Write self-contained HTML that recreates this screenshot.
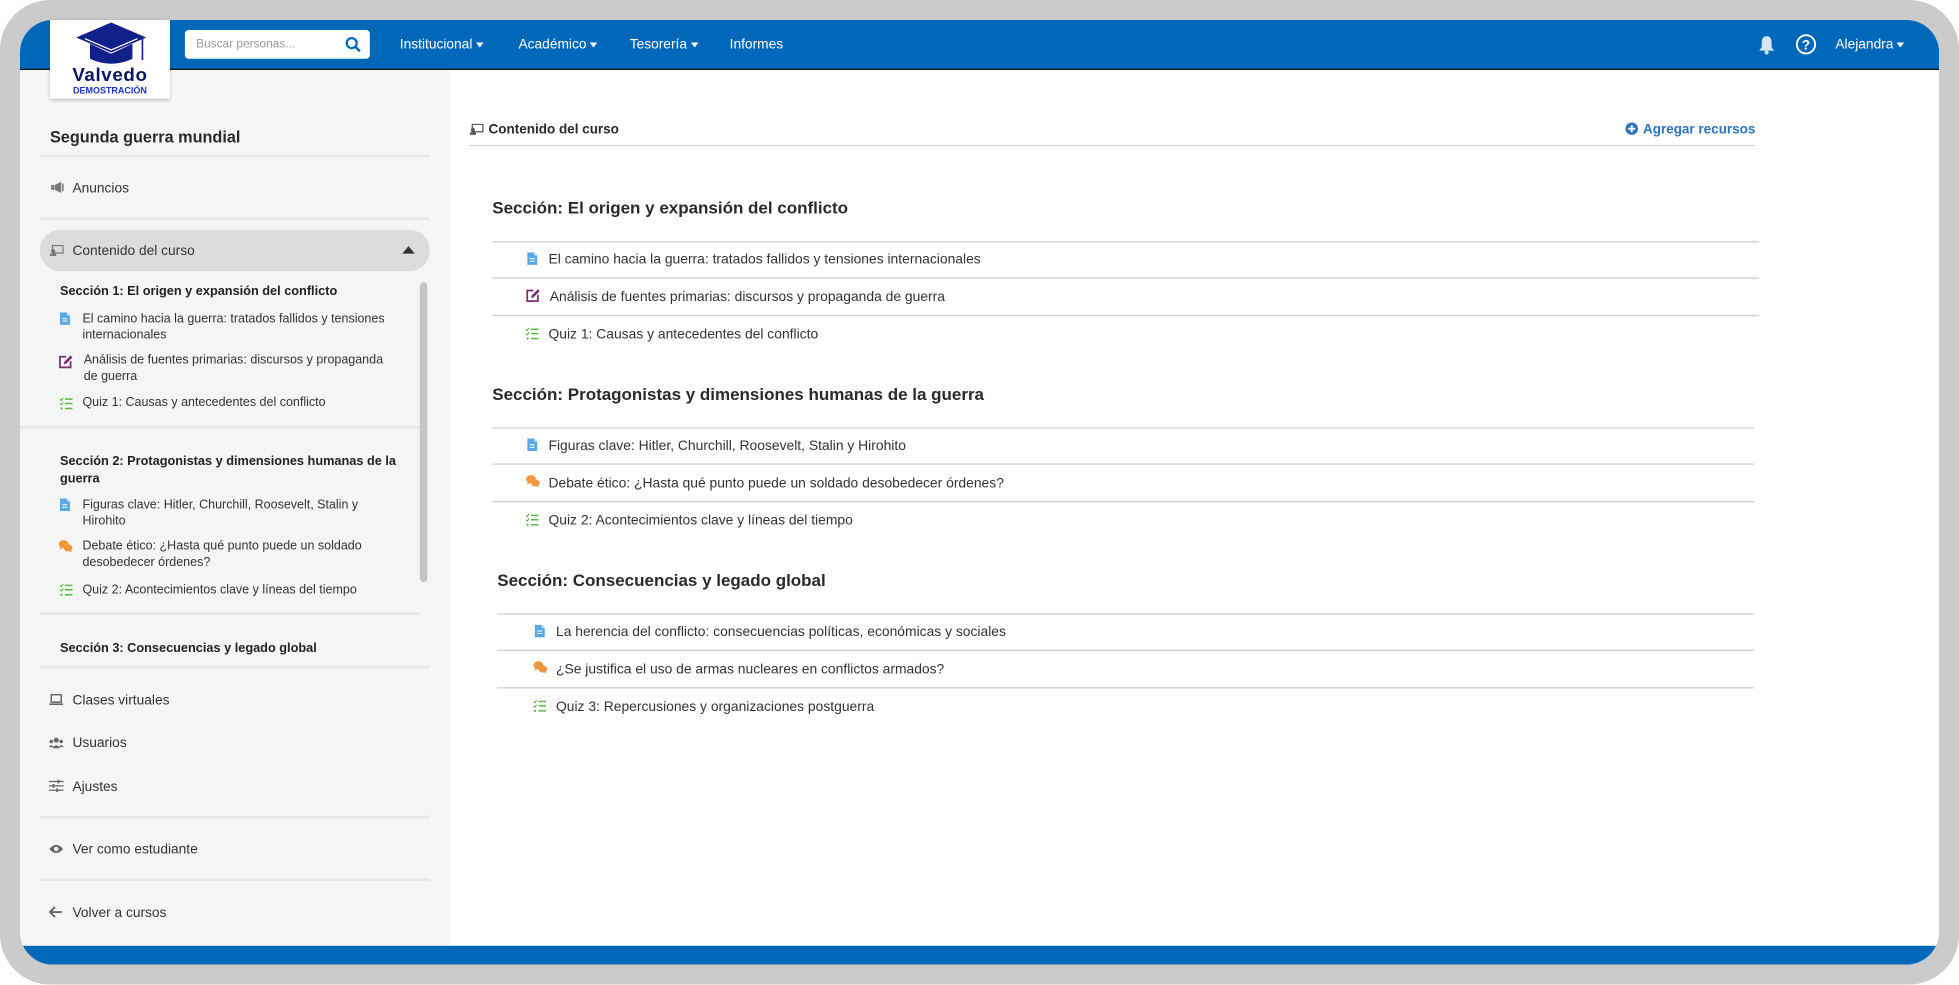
<!DOCTYPE html>
<html><head><meta charset="utf-8">
<style>
*{margin:0;padding:0;box-sizing:border-box}
html,body{width:1959px;height:984px;overflow:hidden;background:#fff}
#w{position:absolute;left:0;top:0;width:1568px;height:788px;transform:scale(1.2494);transform-origin:0 0;font-family:"Liberation Sans",sans-serif;color:#333}
.a{position:absolute;white-space:nowrap}
.frame{position:absolute;left:0;top:0;width:1568px;height:788px;border-radius:40px;background:#cbcbcb}
.inner{position:absolute;left:16px;top:16px;width:1536px;height:756px;border-radius:26px;overflow:hidden;background:#fff}
.nav{position:absolute;left:0;top:0;width:1536px;height:40px;background:#0168b9;border-bottom:1px solid #111}
.side{position:absolute;left:0;top:41px;width:344px;height:700px;background:#f4f5f5}
.bot{position:absolute;left:0;top:741px;width:1536px;height:15px;background:#0168b9}
.hl{position:absolute;height:2px;background:#e6e8e8}
.ml{position:absolute;height:1px;background:#cfcfcf}
.nm{color:#fff;font-size:11px}
.s{font-size:10px;color:#333}
.sb{font-size:10.2px;font-weight:bold;color:#222}
.m{font-size:11.1px;color:#333}
.h{font-size:13.6px;font-weight:bold;color:#2a2a2a}
.car{display:inline-block;width:0;height:0;border-left:3.5px solid transparent;border-right:3.5px solid transparent;border-top:4px solid #fff;vertical-align:middle;margin-left:3px}
</style></head><body><div id="w">
<div class="frame"></div>
<div class="inner">
 <div class="nav"></div>
 <div class="side"></div>
 <div class="bot"></div>
</div>
<!-- logo -->
<div class="a" style="left:40px;top:16px;width:96px;height:63px;background:#fff;box-shadow:0 1px 3px rgba(0,0,0,.25)"></div>
<svg class="a" style="left:60px;top:17px" width="58" height="38" viewBox="0 0 58 38">
<polygon points="29,1 57,13 29,25 1,13" fill="#12208a"/>
<path d="M12,18 L12,30 Q29,38 46,30 L46,18 L29,26 Z" fill="#12208a"/>
<line x1="54" y1="14" x2="54" y2="31" stroke="#12208a" stroke-width="1.3"/>
<path d="M8,14 L29,23 L50,14" stroke="#fff" stroke-width="1" fill="none"/>
</svg>
<div class="a" style="left:40px;top:52px;width:96px;text-align:center;font-size:15px;font-weight:bold;color:#0d1660;letter-spacing:.5px">Valvedo</div>
<div class="a" style="left:40px;top:68px;width:96px;text-align:center;font-size:7.2px;font-weight:bold;color:#1a33c4">DEMOSTRACIÓN</div>
<!-- search -->
<div class="a" style="left:148px;top:24px;width:148px;height:23px;background:#fff;border-radius:3px"></div>
<div class="a" style="left:157px;top:30px;font-size:9.5px;color:#999">Buscar personas...</div>
<svg class="a" style="left:276px;top:29px" width="13" height="13" viewBox="0 0 13 13"><circle cx="5.5" cy="5.5" r="4" stroke="#0168b9" stroke-width="1.8" fill="none"/><line x1="8.5" y1="8.5" x2="12" y2="12" stroke="#0168b9" stroke-width="2"/></svg>
<div class="a nm" style="left:320px;top:30px">Institucional<span class="car"></span></div>
<div class="a nm" style="left:415px;top:30px">Académico<span class="car"></span></div>
<div class="a nm" style="left:504px;top:30px">Tesorería<span class="car"></span></div>
<div class="a nm" style="left:584px;top:30px">Informes</div>
<svg class="a" style="left:1407px;top:28px" width="14" height="16" viewBox="0 0 14 16"><path d="M7,1 C3.5,1 3,4 3,7 L3,10 L1,12.5 L13,12.5 L11,10 L11,7 C11,4 10.5,1 7,1Z" fill="#d6e6f5"/><circle cx="7" cy="14" r="1.6" fill="#d6e6f5"/></svg>
<svg class="a" style="left:1437px;top:27px" width="17" height="17" viewBox="0 0 17 17"><circle cx="8.5" cy="8.5" r="7.3" stroke="#fff" stroke-width="1.5" fill="none"/><text x="8.5" y="12.5" font-size="11" font-weight="bold" fill="#fff" text-anchor="middle" font-family="Liberation Sans">?</text></svg>
<div class="a nm" style="left:1469px;top:30px">Alejandra<span class="car"></span></div>

<!-- sidebar -->
<div class="a" style="left:40px;top:102px;font-size:13px;font-weight:bold;color:#2a2a2a">Segunda guerra mundial</div>
<div class="hl" style="left:32px;top:124px;width:312px"></div>
<div class="a s" style="left:58px;top:145px;font-size:11px">Anuncios</div>
<div class="hl" style="left:32px;top:174px;width:312px"></div>
<div class="a" style="left:32px;top:184px;width:312px;height:33px;border-radius:16px;background:#dcdcdc"></div>
<svg class="a" style="left:40px;top:196px" width="11" height="9" viewBox="0 0 11 9"><rect x="2" y="0.5" width="8.5" height="6" fill="none" stroke="#777"/><circle cx="2.5" cy="5" r="1.6" fill="#777"/><rect x="0" y="7" width="5" height="2" fill="#777"/></svg>
<div class="a s" style="left:58px;top:195px;font-size:11px">Contenido del curso</div>
<div class="a" style="left:322px;top:197px;width:0;height:0;border-left:5px solid transparent;border-right:5px solid transparent;border-bottom:6px solid #333"></div>
<div class="a" style="left:336px;top:226px;width:6px;height:240px;border-radius:3px;background:#c4c4c4"></div>

<div class="a sb" style="left:48px;top:228px">Sección 1: El origen y expansión del conflicto</div>
<div class="a s" style="left:66px;top:249px;line-height:13px">El camino hacia la guerra: tratados fallidos y tensiones<br>internacionales</div>
<div class="a s" style="left:67px;top:282px;line-height:13px">Análisis de fuentes primarias: discursos y propaganda<br>de guerra</div>
<div class="a s" style="left:66px;top:317px">Quiz 1: Causas y antecedentes del conflicto</div>
<div class="hl" style="left:16px;top:341px;width:320px"></div>
<div class="a sb" style="left:48px;top:363px;line-height:14px;white-space:normal;width:280px">Sección 2: Protagonistas y dimensiones humanas de la guerra</div>
<div class="a s" style="left:66px;top:398px;line-height:13px">Figuras clave: Hitler, Churchill, Roosevelt, Stalin y<br>Hirohito</div>
<div class="a s" style="left:66px;top:431px;line-height:13px">Debate ético: ¿Hasta qué punto puede un soldado<br>desobedecer órdenes?</div>
<div class="a s" style="left:66px;top:467px">Quiz 2: Acontecimientos clave y líneas del tiempo</div>
<div class="hl" style="left:32px;top:490px;width:304px"></div>
<div class="a sb" style="left:48px;top:514px">Sección 3: Consecuencias y legado global</div>
<div class="hl" style="left:32px;top:533px;width:312px"></div>
<div class="a s" style="left:58px;top:555px;font-size:11px">Clases virtuales</div>
<div class="a s" style="left:58px;top:589px;font-size:11px">Usuarios</div>
<div class="a s" style="left:58px;top:624px;font-size:11px">Ajustes</div>
<div class="hl" style="left:32px;top:653px;width:312px"></div>
<div class="a s" style="left:58px;top:674px;font-size:11px">Ver como estudiante</div>
<div class="hl" style="left:32px;top:703px;width:312px"></div>
<div class="a s" style="left:58px;top:725px;font-size:11px">Volver a cursos</div>
<!-- sidebar icons -->
<svg class="a" style="left:39px;top:555px" width="12" height="10" viewBox="0 0 12 10"><rect x="2" y="1" width="8" height="6" fill="none" stroke="#666" stroke-width="1.2"/><rect x="0.5" y="8" width="11" height="1.3" fill="#666"/></svg>
<svg class="a" style="left:39px;top:590px" width="12" height="9" viewBox="0 0 12 9"><circle cx="6" cy="2.5" r="2" fill="#666"/><circle cx="2" cy="3.5" r="1.4" fill="#666"/><circle cx="10" cy="3.5" r="1.4" fill="#666"/><path d="M3,9 Q6,4 9,9Z M0,8 Q2,5 4,8Z M8,8 Q10,5 12,8Z" fill="#666"/></svg>
<svg class="a" style="left:39px;top:624px" width="12" height="10" viewBox="0 0 12 10"><g stroke="#666" stroke-width="1"><line x1="0" y1="1.5" x2="12" y2="1.5"/><line x1="0" y1="5" x2="12" y2="5"/><line x1="0" y1="8.5" x2="12" y2="8.5"/></g><g fill="#666"><rect x="7" y="0" width="1.5" height="3"/><rect x="3" y="3.5" width="1.5" height="3"/><rect x="6" y="7" width="1.5" height="3"/></g></svg>
<svg class="a" style="left:39px;top:675px" width="12" height="9" viewBox="0 0 12 9"><path d="M0.5,4.5 Q6,-2 11.5,4.5 Q6,11 0.5,4.5Z" fill="#666"/><circle cx="6" cy="4.5" r="1.8" fill="#f4f5f5"/></svg>
<svg class="a" style="left:39px;top:725px" width="11" height="10" viewBox="0 0 11 10"><path d="M5,1 L1,5 L5,9 M1,5 L10.5,5" stroke="#666" stroke-width="1.5" fill="none"/></svg>
<svg class="a" style="left:40px;top:145px" width="11" height="10" viewBox="0 0 11 10"><path d="M4,3 L9,0.5 L9,9.5 L4,7Z" fill="#777"/><rect x="1" y="3" width="2.5" height="4" fill="#777"/><rect x="9.7" y="2" width="1.3" height="6" fill="#777"/></svg>

<!-- main -->
<svg class="a" style="left:376px;top:99px" width="11" height="9" viewBox="0 0 11 9"><rect x="2" y="0.5" width="8.5" height="6" fill="none" stroke="#555"/><circle cx="2.5" cy="5" r="1.6" fill="#555"/><rect x="0" y="7" width="5" height="2" fill="#555"/></svg>
<div class="a" style="left:391px;top:98px;font-size:10.8px;font-weight:bold;color:#2a2a2a">Contenido del curso</div>
<svg class="a" style="left:1301px;top:98px" width="10" height="10" viewBox="0 0 10 10"><circle cx="5" cy="5" r="5" fill="#2d74bd"/><path d="M5,2.2 V7.8 M2.2,5 H7.8" stroke="#fff" stroke-width="1.6"/></svg>
<div class="a" style="left:1315px;top:98px;font-size:10.8px;font-weight:bold;color:#2d74bd">Agregar recursos</div>
<div class="ml" style="left:376px;top:116px;width:1028px"></div>

<div class="a h" style="left:394px;top:159px">Sección: El origen y expansión del conflicto</div>
<div class="ml" style="left:394px;top:193px;width:1014px"></div>
<div class="ml" style="left:394px;top:222px;width:1014px"></div>
<div class="ml" style="left:394px;top:252px;width:1014px"></div>
<div class="a m" style="left:439px;top:202px">El camino hacia la guerra: tratados fallidos y tensiones internacionales</div>
<div class="a m" style="left:440px;top:232px">Análisis de fuentes primarias: discursos y propaganda de guerra</div>
<div class="a m" style="left:439px;top:262px">Quiz 1: Causas y antecedentes del conflicto</div>

<div class="a h" style="left:394px;top:308px">Sección: Protagonistas y dimensiones humanas de la guerra</div>
<div class="ml" style="left:394px;top:342px;width:1010px"></div>
<div class="ml" style="left:394px;top:371px;width:1010px"></div>
<div class="ml" style="left:394px;top:401px;width:1010px"></div>
<div class="a m" style="left:439px;top:351px">Figuras clave: Hitler, Churchill, Roosevelt, Stalin y Hirohito</div>
<div class="a m" style="left:439px;top:381px">Debate ético: ¿Hasta qué punto puede un soldado desobedecer órdenes?</div>
<div class="a m" style="left:439px;top:411px">Quiz 2: Acontecimientos clave y líneas del tiempo</div>

<div class="a h" style="left:398px;top:457px">Sección: Consecuencias y legado global</div>
<div class="ml" style="left:398px;top:491px;width:1006px"></div>
<div class="ml" style="left:398px;top:520px;width:1006px"></div>
<div class="ml" style="left:398px;top:550px;width:1006px"></div>
<div class="a m" style="left:445px;top:500px">La herencia del conflicto: consecuencias políticas, económicas y sociales</div>
<div class="a m" style="left:445px;top:530px">¿Se justifica el uso de armas nucleares en conflictos armados?</div>
<div class="a m" style="left:445px;top:560px">Quiz 3: Repercusiones y organizaciones postguerra</div>

<svg width="0" height="0" style="position:absolute"><defs>
<g id="doc"><path d="M0,0 H5.5 L8,2.5 V10 H0Z" fill="#5aa9e6"/><path d="M5.5,0 V2.5 H8" fill="#bfe0f8"/><path d="M2,5 H6 M2,7 H6" stroke="#fff" stroke-width=".8"/></g>
<g id="edit"><path d="M6,1.5 H1 V10 H9.5 V5" stroke="#7b2d77" stroke-width="1.4" fill="none"/><path d="M4,7.5 L4.5,5.5 L9.5,0.5 L11,2 L6,7Z" fill="#7b2d77"/></g>
<g id="quiz"><path d="M0,1.5 L1,2.5 L2.5,0.5 M0,5 L1,6 L2.5,4" stroke="#5bb745" stroke-width=".9" fill="none"/><circle cx="1.2" cy="9" r=".9" fill="#5bb745"/><path d="M4,1.5 H10 M4,5 H10 M4,9 H10" stroke="#5bb745" stroke-width="1.2"/></g>
<g id="chat"><ellipse cx="4" cy="3.5" rx="4" ry="3.2" fill="#f0963c"/><path d="M1.5,6 L0.5,8 L3.5,6.5Z" fill="#f0963c"/><ellipse cx="7.5" cy="6.5" rx="3.5" ry="2.8" fill="#f0963c"/><path d="M9.5,8.5 L10.8,10 L8,9Z" fill="#f0963c"/></g>
</defs></svg>
<svg class="a" style="left:48px;top:250px" width="11" height="11"><use href="#doc"/></svg>
<svg class="a" style="left:47px;top:284px" width="12" height="11"><use href="#edit"/></svg>
<svg class="a" style="left:48px;top:318px" width="11" height="11"><use href="#quiz"/></svg>
<svg class="a" style="left:48px;top:399px" width="11" height="11"><use href="#doc"/></svg>
<svg class="a" style="left:47px;top:432px" width="12" height="11"><use href="#chat"/></svg>
<svg class="a" style="left:48px;top:467px" width="11" height="11"><use href="#quiz"/></svg>
<svg class="a" style="left:422px;top:202px" width="11" height="11"><use href="#doc"/></svg>
<svg class="a" style="left:421px;top:231px" width="12" height="11"><use href="#edit"/></svg>
<svg class="a" style="left:421px;top:262px" width="11" height="11"><use href="#quiz"/></svg>
<svg class="a" style="left:422px;top:351px" width="11" height="11"><use href="#doc"/></svg>
<svg class="a" style="left:421px;top:380px" width="12" height="11"><use href="#chat"/></svg>
<svg class="a" style="left:421px;top:411px" width="11" height="11"><use href="#quiz"/></svg>
<svg class="a" style="left:428px;top:500px" width="11" height="11"><use href="#doc"/></svg>
<svg class="a" style="left:427px;top:529px" width="12" height="11"><use href="#chat"/></svg>
<svg class="a" style="left:427px;top:560px" width="11" height="11"><use href="#quiz"/></svg>
</div></body></html>
